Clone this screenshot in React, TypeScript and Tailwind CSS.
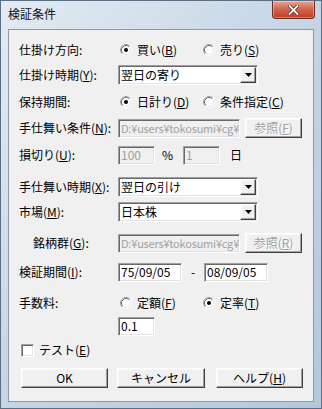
import React from 'react';

const sunken =
  'border border-t-[#a0a0a0] border-l-[#a0a0a0] border-b-white border-r-white shadow-[inset_1px_1px_0_#696969,inset_-1px_-1px_0_#e3e3e3]';
const raised =
  'border border-t-white border-l-white border-b-[#404040] border-r-[#404040] shadow-[inset_-1px_-1px_0_#a0a0a0,inset_1px_1px_0_#f8f8f8]';

const U = ({ c }: { c: string }) => <span className="underline underline-offset-[1px]">{c}</span>;

const Radio = ({ checked, children }: { checked?: boolean; children: React.ReactNode }) => (
  <div className="flex items-center gap-[5px] w-[83px] shrink-0">
    <svg width="12" height="12" viewBox="0 0 12 12" className="shrink-0">
      <circle cx="6" cy="6" r="5" fill="#fff" />
      <path d="M9.89 2.11 A5.5 5.5 0 0 0 2.11 9.89" fill="none" stroke="#a0a0a0" strokeWidth="1" />
      <path d="M9.18 2.82 A4.5 4.5 0 0 0 2.82 9.18" fill="none" stroke="#696969" strokeWidth="1" />
      <path d="M9.89 2.11 A5.5 5.5 0 0 1 2.11 9.89" fill="none" stroke="#ffffff" strokeWidth="1" />
      <path d="M9.18 2.82 A4.5 4.5 0 0 1 2.82 9.18" fill="none" stroke="#e3e3e3" strokeWidth="1" />
      {checked && <circle cx="6" cy="6" r="2" fill="#000" />}
    </svg>
    <span>{children}</span>
  </div>
);

const Combo = ({ value }: { value: string }) => (
  <div className={`w-[140px] h-[20px] bg-white flex items-center ${sunken}`}>
    <span className="flex-1 pl-[2px] leading-none">{value}</span>
    <div className={`w-[16px] h-[16px] mr-[1px] bg-[#f0f0f0] flex items-center justify-center ${raised}`}>
      <svg width="7" height="4" viewBox="0 0 7 4">
        <path d="M0 0 H7 L3.5 4 Z" fill="#000" />
      </svg>
    </div>
  </div>
);

const TextBox = ({ value, w, disabled, small }: { value: string; w: string; disabled?: boolean; small?: boolean }) => (
  <div
    className={`${w} h-[19px] flex items-center overflow-hidden whitespace-nowrap pl-[2px] ${sunken} ${
      disabled ? 'bg-[#f0f0f0] text-[#a0a0a0]' : 'bg-white text-black'
    } ${small ? 'text-[11px] tracking-[-0.2px]' : ''}`}
  >
    {value}
  </div>
);

const Btn = ({ children, w, disabled, className = '' }: { children: React.ReactNode; w: string; disabled?: boolean; className?: string }) => (
  <div
    className={`${w} h-[20px] bg-[#f0f0f0] flex items-center justify-center ${raised} ${
      disabled ? 'text-[#a0a0a0] [text-shadow:1px_1px_0_#fff]' : 'text-black'
    } ${className}`}
  >
    {children}
  </div>
);

const Row = ({ mt, label, indent, children }: { mt: string; label?: React.ReactNode; indent?: boolean; children?: React.ReactNode }) => (
  <div className={`flex items-center h-[20px] ${mt}`}>
    <div className={`w-[99px] shrink-0 ${indent ? 'pl-[14px]' : ''}`}>{label}</div>
    {children}
  </div>
);

export default function App() {
  const path = 'D:¥users¥tokosumi¥cg¥';
  return (
    <div className="w-[322px] h-[409px] overflow-hidden font-['Noto_Sans_CJK_JP',sans-serif] text-[12px] text-black border border-[#5b6e84] bg-linear-to-br from-[#e3ebf3] via-[#c6d5e4] to-[#b3c8dd] flex flex-col">
      {/* title bar */}
      <div className="h-[28px] flex items-start shrink-0">
        <div className="pl-[7px] pt-[5px] text-[12px] leading-[16px] text-[#111]">検証条件</div>
        <div className="ml-auto mr-[6px] w-[43px] h-[18px] rounded-b-[4px] border border-t-0 border-[#6b2a20] bg-linear-to-b from-[#e6a593] via-[#d0624b] to-[#c0391f] flex items-center justify-center shadow-[inset_0_0_0_1px_rgba(255,255,255,0.35)]">
          <svg width="11" height="10" viewBox="0 0 11 10">
            <path d="M1.5 1 L9.5 9 M9.5 1 L1.5 9" stroke="#5a1d12" strokeWidth="3.2" strokeLinecap="square" />
            <path d="M1.5 1 L9.5 9 M9.5 1 L1.5 9" stroke="#ffffff" strokeWidth="1.8" strokeLinecap="square" />
          </svg>
        </div>
      </div>

      {/* client area */}
      <div className="ml-[7px] w-[306px] h-[373px] border border-[#8d9aab] bg-[#f0f0f0] pl-[10px] pt-[10px] leading-none">
        <Row mt="mt-0" label="仕掛け方向:">
          <div className="flex ml-[2px]">
            <Radio checked>
              買い(<U c="B" />)
            </Radio>
            <Radio>
              売り(<U c="S" />)
            </Radio>
          </div>
        </Row>

        <Row mt="mt-[5px]" label={<>仕掛け時期(<U c="Y" />):</>}>
          <Combo value="翌日の寄り" />
        </Row>

        <Row mt="mt-[7px]" label="保持期間:">
          <div className="flex ml-[2px]">
            <Radio checked>
              日計り(<U c="D" />)
            </Radio>
            <Radio>
              条件指定(<U c="C" />)
            </Radio>
          </div>
        </Row>

        <Row mt="mt-[6px]" label={<>手仕舞い条件(<U c="N" />):</>}>
          <TextBox value={path} w="w-[122px]" disabled small />
          <Btn w="w-[57px]" disabled className="ml-[5px]">
            参照(<U c="F" />)
          </Btn>
        </Row>

        <Row mt="mt-[7px]" label={<>損切り(<U c="U" />):</>}>
          <TextBox value="100" w="w-[37px]" disabled />
          <span className="ml-[7px] w-[21px]">%</span>
          <TextBox value="1" w="w-[37px]" disabled />
          <span className="ml-[10px]">日</span>
        </Row>

        <Row mt="mt-[12px]" label={<>手仕舞い時期(<U c="X" />):</>}>
          <Combo value="翌日の引け" />
        </Row>

        <Row mt="mt-[5px]" label={<>市場(<U c="M" />):</>}>
          <Combo value="日本株" />
        </Row>

        <Row mt="mt-[11px]" indent label={<>銘柄群(<U c="G" />):</>}>
          <TextBox value={path} w="w-[122px]" disabled small />
          <Btn w="w-[57px]" disabled className="ml-[5px]">
            参照(<U c="R" />)
          </Btn>
        </Row>

        <Row mt="mt-[9px]" label={<>検証期間(<U c="I" />):</>}>
          <TextBox value="75/09/05" w="w-[64px]" />
          <span className="w-[22px] text-center">-</span>
          <TextBox value="08/09/05" w="w-[64px]" />
        </Row>

        <Row mt="mt-[11px]" label="手数料:">
          <div className="flex ml-[2px]">
            <Radio>
              定額(<U c="F" />)
            </Radio>
            <Radio checked>
              定率(<U c="T" />)
            </Radio>
          </div>
        </Row>

        <Row mt="mt-[3px]">
          <TextBox value="0.1" w="w-[37px]" />
        </Row>

        <div className="flex items-center h-[20px] mt-[4px] ml-[2px] gap-[5px]">
          <div className={`w-[13px] h-[13px] bg-white ${sunken}`} />
          <span>
            テスト(<U c="E" />)
          </span>
        </div>

        <div className="flex mt-[8px] ml-[2px]">
          <Btn w="w-[87px]">OK</Btn>
          <Btn w="w-[88px]" className="ml-[9px]">
            キャンセル
          </Btn>
          <Btn w="w-[87px]" className="ml-[11px]">
            ヘルプ(<U c="H" />)
          </Btn>
        </div>
      </div>
    </div>
  );
}
